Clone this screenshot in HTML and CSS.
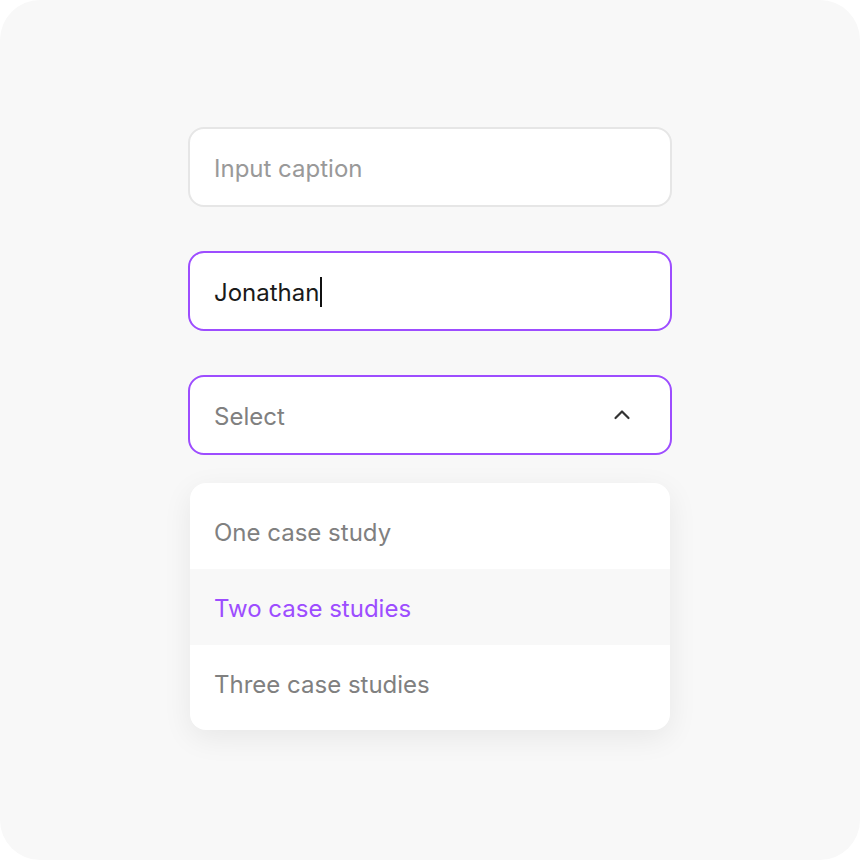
FILE: index.html
```html
<!DOCTYPE html>
<html>
<head>
<meta charset="utf-8">
<link rel="stylesheet" href="styles.css">
</head>
<body>
<div class="card">
  <div class="form">
    <div class="field field-idle"><span class="placeholder">Input caption</span></div>
    <div class="field field-active"><span class="value">Jonathan</span><span class="caret"></span></div>
    <div class="field field-active field-select">
      <span class="placeholder select-text">Select</span>
      <svg class="chevron" width="20" height="20" viewBox="0 0 20 20"><path d="M3.5 13 L10 6.5 L16.5 13" fill="none" stroke="#333" stroke-width="2.2" stroke-linecap="round" stroke-linejoin="round"/></svg>
    </div>
    <div class="menu">
      <div class="item">One case study</div>
      <div class="item item-active">Two case studies</div>
      <div class="item">Three case studies</div>
    </div>
  </div>
</div>
</body>
</html>
```
FILE: styles.css
```css
html, body { margin: 0; padding: 0; background: #ffffff; }
body { font-family: Inter, "Noto Sans", sans-serif; }
.card {
  width: 860px;
  height: 860px;
  box-sizing: border-box;
  background: #f8f8f8;
  border-radius: 40px;
  padding-top: 127px;
  padding-left: 188px;
}
.form { width: 484px; display: flex; flex-direction: column; }
.field {
  box-sizing: border-box;
  height: 80px;
  background: #fff;
  border-radius: 16px;
  border: 2px solid #e6e6e6;
  padding: 2px 24px 0 25px;
  display: flex;
  align-items: center;
  font-size: 24px;
  margin-bottom: 44px;
}
.placeholder, .value { margin-left: -1px; }
.field-active { border-color: #9d4dff; }
.placeholder { color: #999999; }
.select-text { color: #808080; flex: 1; }
.value { color: #1a1a1a; }
.caret { display: inline-block; width: 2px; height: 30px; background: #111; margin-left: 1px; }
.field-select { margin-bottom: 28px; padding-right: 38px; }
.chevron { display: block; margin-top: -2px; }
.menu {
  margin: 0 2px;
  background: #fff;
  border-radius: 16px;
  padding: 10px 0 9px;
  box-shadow: 0 8px 30px rgba(0,0,0,0.07);
}
.item {
  height: 76px;
  display: flex;
  align-items: center;
  padding: 2px 0 0 24px;
  box-sizing: border-box;
  font-size: 24px;
  color: #808080;
}
.item-active { background: #f8f8f8; color: #9d4dff; }
```
